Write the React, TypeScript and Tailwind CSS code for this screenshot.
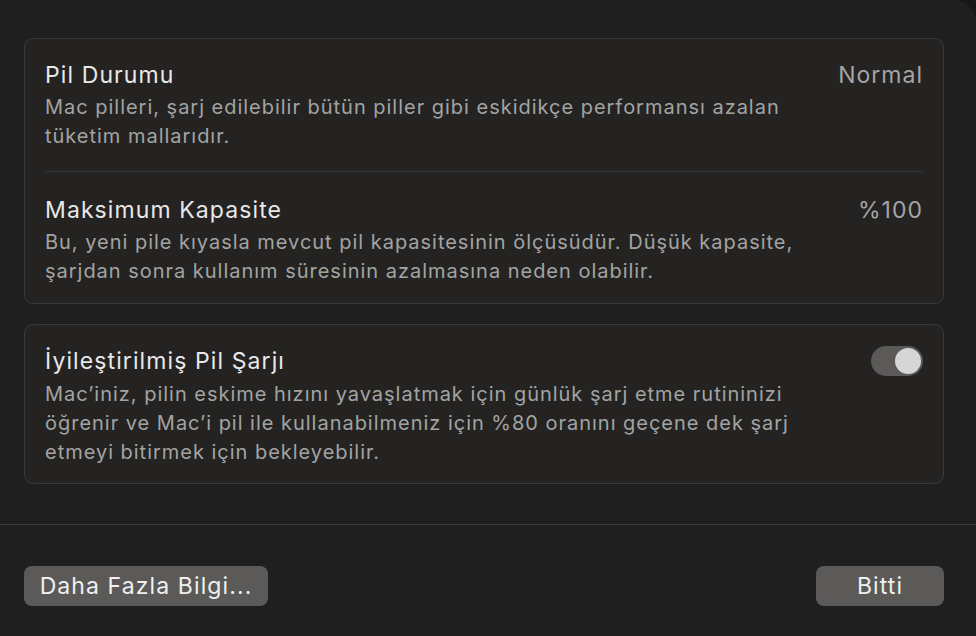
import React from "react";

const Row = ({ title, value, children }: { title: string; value?: React.ReactNode; children: React.ReactNode }) => (
  <div>
    <div className="flex items-center justify-between">
      <div className="text-[23px] leading-[28px] tracking-[1.1px] text-[#e8e8e8]">{title}</div>
      {value}
    </div>
    <p className="mt-[4px] text-[20px] leading-[29px] tracking-[0.98px] text-[#a3a3a3]">{children}</p>
  </div>
);

const App: React.FC = () => {
  return (
    <div className="w-[976px] h-[636px] bg-[#171717] overflow-hidden">
      <div
        className="w-full h-full flex flex-col bg-[#201f1f] rounded-tr-[22px]"
        style={{ fontFamily: "Inter, 'Noto Sans', sans-serif" }}
      >
        <div className="pl-6 pr-8 pt-[38px]">
          <div className="rounded-[9px] border border-[#3a3939] bg-[#242322] px-5 pt-[22px] pb-[17px]">
            <Row title="Pil Durumu" value={<span className="text-[23px] leading-[28px] tracking-[1px] text-[#a5a5a5]">Normal</span>}>
              Mac pilleri, şarj edilebilir bütün piller gibi eskidikçe performansı azalan
              <br />
              tüketim mallarıdır.
            </Row>
            <div className="h-px bg-[#383737] mt-[20px] mb-[24px]" />
            <Row title="Maksimum Kapasite" value={<span className="text-[23px] leading-[28px] tracking-[1px] text-[#a5a5a5]">%100</span>}>
              Bu, yeni pile kıyasla mevcut pil kapasitesinin ölçüsüdür. Düşük kapasite,
              <br />
              şarjdan sonra kullanım süresinin azalmasına neden olabilir.
            </Row>
          </div>

          <div className="mt-[20px] rounded-[9px] border border-[#3a3939] bg-[#242322] px-5 pt-[21px] pb-[16px]">
            <Row
              title="İyileştirilmiş Pil Şarjı"
              value={
                <span className="relative flex h-[30px] w-[52px] items-center rounded-full bg-[#5b5a59]">
                  <span className="absolute right-[2px] h-[26px] w-[26px] rounded-full bg-[#d6d6d6]" />
                </span>
              }
            >
              Mac’iniz, pilin eskime hızını yavaşlatmak için günlük şarj etme rutininizi
              <br />
              öğrenir ve Mac’i pil ile kullanabilmeniz için %80 oranını geçene dek şarj
              <br />
              etmeyi bitirmek için bekleyebilir.
            </Row>
          </div>
        </div>

        <div className="mt-[40px] h-px bg-[#3a3838]" />

        <div className="flex items-center justify-between pl-6 pr-8 pt-[41px]">
          <button className="h-[40px] w-[244px] rounded-[8px] bg-[#5b5a59] text-[23px] tracking-[1.1px] text-[#f0f0f0]">
            Daha Fazla Bilgi...
          </button>
          <button className="h-[40px] w-[128px] rounded-[8px] bg-[#5b5a59] text-[23px] tracking-[1.1px] text-[#f0f0f0]">
            Bitti
          </button>
        </div>
      </div>
    </div>
  );
};

export default App;
